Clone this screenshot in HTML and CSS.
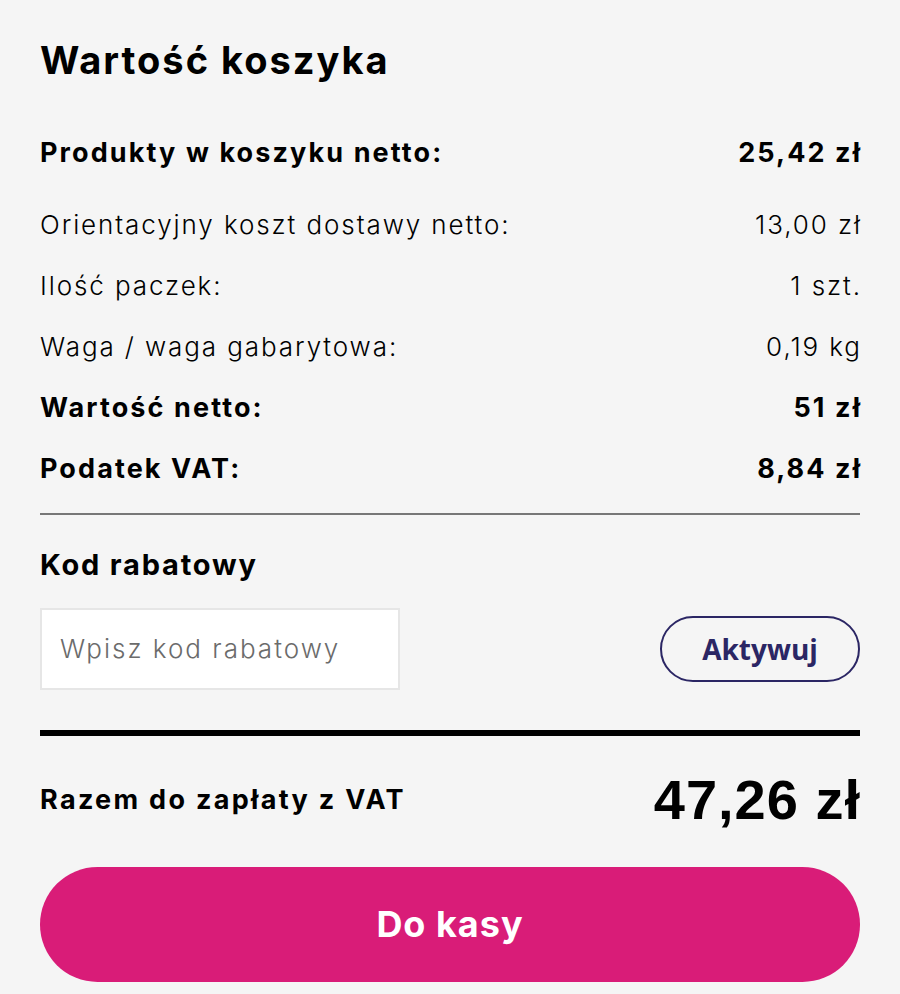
FILE: index.html
```html
<!DOCTYPE html>
<html lang="pl">
<head>
<meta charset="utf-8">
<title>Wartość koszyka</title>
<link rel="stylesheet" href="styles.css">
</head>
<body>
<section class="cart">
  <h1 class="title">Wartość koszyka</h1>
  <div class="row row-bold row-first"><span>Produkty w koszyku netto:</span><span>25,42 zł</span></div>
  <div class="rows">
    <div class="row"><span>Orientacyjny koszt dostawy netto:</span><span>13,00 zł</span></div>
    <div class="row"><span>Ilość paczek:</span><span>1 szt.</span></div>
    <div class="row"><span>Waga / waga gabarytowa:</span><span>0,19 kg</span></div>
    <div class="row row-bold"><span>Wartość netto:</span><span>51 zł</span></div>
    <div class="row row-bold"><span>Podatek VAT:</span><span>8,84 zł</span></div>
  </div>
  <hr class="divider">
  <h2 class="code-title">Kod rabatowy</h2>
  <div class="code-row">
    <input class="code-input" type="text" placeholder="Wpisz kod rabatowy">
    <button class="btn-activate" type="button">Aktywuj</button>
  </div>
  <hr class="divider-strong">
  <div class="total">
    <span class="total-label">Razem do zapłaty z VAT</span>
    <span class="total-value">47,26 zł</span>
  </div>
  <button class="btn-checkout" type="button">Do kasy</button>
</section>
</body>
</html>
```
FILE: styles.css
```css
* { box-sizing: border-box; }
html, body { margin: 0; padding: 0; background: #f5f5f5; }
body {
  font-family: "Inter", "Noto Sans", sans-serif;
  color: #000;
}
.cart {
  padding: 36px 40px 0;
  display: flex;
  flex-direction: column;
}
.title {
  margin: 0;
  font-size: 38px;
  line-height: 48px;
  font-weight: 700;
  letter-spacing: 2px;
}
.row {
  display: flex;
  justify-content: space-between;
  align-items: center;
  height: 61px;
  font-size: 26px;
  font-weight: 300;
  letter-spacing: 1.9px;
}
.row > span:last-child { margin-right: -1.9px; }
.row-bold {
  font-size: 27px;
  font-weight: 700;
  letter-spacing: 2.1px;
}
.row-bold > span:last-child { margin-right: -2.1px; }
.row-first { margin-top: 37.5px; }
.rows { margin-top: 11px; }
.divider {
  margin: 14px 0 0;
  border: 0;
  height: 2px;
  background: #777;
}
.code-title {
  margin: 30px 0 0;
  font-size: 29px;
  line-height: 40px;
  font-weight: 700;
  letter-spacing: 1.8px;
}
.code-row {
  margin-top: 23px;
  display: flex;
  justify-content: space-between;
  align-items: center;
}
.code-input {
  width: 360px;
  height: 82px;
  border: 2px solid #e6e6e6;
  background: #fff;
  padding: 0 18px;
  font-family: inherit;
  font-size: 26px;
  font-weight: 300;
  letter-spacing: 2px;
  color: #333;
  outline: none;
}
.code-input::placeholder { color: #6b6b6b; }
.btn-activate {
  width: 200px;
  height: 66px;
  border: 2px solid #2b2664;
  border-radius: 33px;
  background: transparent;
  color: #2b2664;
  font-family: "Open Sans", sans-serif;
  font-size: 28px;
  font-weight: 700;
  padding: 0;
}
.divider-strong {
  margin: 40px 0 0;
  border: 0;
  height: 6px;
  background: #000;
}
.total {
  margin-top: 34px;
  height: 60px;
  display: flex;
  justify-content: space-between;
  align-items: center;
}
.total-label {
  font-size: 27px;
  font-weight: 700;
  letter-spacing: 2.3px;
}
.total-value {
  font-family: "Liberation Sans", sans-serif;
  font-size: 56px;
  font-weight: 700;
  letter-spacing: 1px;
  margin-right: -1px;
}
.btn-checkout {
  margin-top: 37px;
  height: 115px;
  width: 100%;
  border: 0;
  border-radius: 58px;
  background: #d91c78;
  color: #fff;
  font-family: inherit;
  font-size: 36px;
  font-weight: 700;
  letter-spacing: 1px;
}
```
